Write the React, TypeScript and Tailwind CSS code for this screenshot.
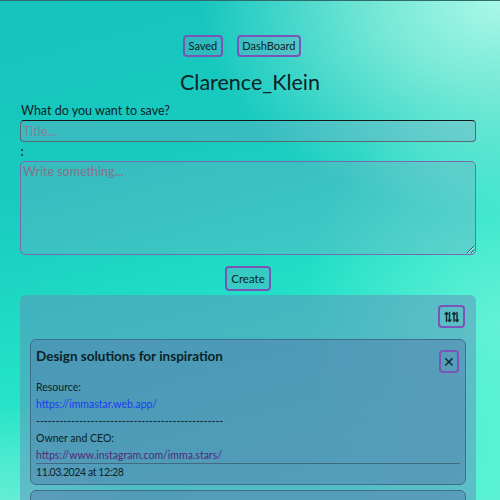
import React, { useState } from 'react';

const SortIcon = () => (
  <svg width="16" height="12" viewBox="0 0 16 12" fill="none" stroke="#0f2a30" strokeWidth="1.4" strokeLinecap="round" strokeLinejoin="round">
    <path d="M2.5 10.5V1.5M1 3L2.5 1.5L4 3" />
    <path d="M5.5 1.5V10.5M4 9L5.5 10.5L7 9" />
    <path d="M10 10.5V1.5M8.5 3L10 1.5L11.5 3" />
    <path d="M13 1.5V10.5M11.5 9L13 10.5L14.5 9" />
  </svg>
);

const App: React.FC = () => {
  const [title, setTitle] = useState('');
  const [body, setBody] = useState('');

  return (
    <div
      className="min-h-[500px] border-t border-[#2f6b6b] bg-[radial-gradient(ellipse_60%_40%_at_100%_0%,#aaf8e6_0%,rgba(160,246,226,0.7)_40%,transparent_100%),radial-gradient(ellipse_40%_45%_at_100%_60%,rgba(120,246,220,0.7)_0%,transparent_100%),radial-gradient(ellipse_30%_25%_at_0%_100%,rgba(150,240,224,0.7)_0%,transparent_100%),linear-gradient(165deg,#16c3be_0%,#18cbbf_30%,#22e0c6_55%,#34eccb_75%,#5cf2d4_100%)] font-['Lato',sans-serif] text-[#0b2327]"
    >
      <div className="flex justify-center gap-[14px] pt-[34px] pr-[16px]">
        <button className="rounded-[4px] border-2 border-[#7a55b8] bg-[rgba(120,150,190,0.25)] px-[3.5px] text-[11px] leading-[18px]">
          Saved
        </button>
        <button className="rounded-[4px] border-2 border-[#7a55b8] bg-[rgba(120,150,190,0.25)] px-[3.5px] text-[11px] leading-[18px]">
          DashBoard
        </button>
      </div>

      <h1 className="mt-[10px] text-center text-[21.5px] leading-[30px]">Clarence_Klein</h1>

      <div className="pl-[20px] pr-[24px]">
        <label className="mt-[5px] block pl-px text-[12.5px] leading-[18px]">What do you want to save?</label>
        <input
          value={title}
          onChange={e => setTitle(e.target.value)}
          placeholder="Title..."
          className="mt-0 block h-[22px] w-full rounded-[4px] border border-[#5a6a70] border-t-[#101818] bg-[rgba(128,160,195,0.3)] px-[2px] text-[12.5px] outline-none placeholder:text-[#8a7f98]"
        />
        <div className="ml-[1px] mt-[7px] h-[7px] w-0 border-l-2 border-dotted border-[#24504f]" />
        <textarea
          value={body}
          onChange={e => setBody(e.target.value)}
          placeholder="Write something..."
          className="mt-[5px] block h-[94px] w-full rounded-[5px] border border-[#7a6ab0] bg-[rgba(128,160,195,0.3)] px-[2px] py-[1px] text-[12.5px] outline-none placeholder:text-[#8c6f88]"
        />
        <div className="mt-[11px] flex justify-center">
          <button className="rounded-[4px] border-2 border-[#7a55b8] bg-[rgba(120,150,190,0.25)] px-[4px] py-[2px] text-[11.5px] leading-[17px]">
            Create
          </button>
        </div>

        <div className="mt-[4px] rounded-[6px] bg-[rgba(98,142,184,0.5)] px-[10px] pt-[10px] pb-[10px]">
          <div className="flex justify-end pr-px">
            <button className="flex h-[23px] w-[27px] items-center justify-center rounded-[4px] border-2 border-[#7a55b8]">
              <SortIcon />
            </button>
          </div>

          <div className="mt-[11px] rounded-[6px] border border-[#3f6f8c] bg-[rgba(83,124,176,0.5)] px-[5px] pt-[6px] pb-[4px]">
            <div className="flex items-start justify-between">
              <h2 className="text-[13.5px] font-bold leading-[20px]">Design solutions for inspiration</h2>
              <button className="mt-[4px] mr-[1px] flex h-[23px] w-[20px] items-center justify-center rounded-[4px] border-2 border-[#7a55b8] text-[14px] leading-none">
                ✕
              </button>
            </div>
            <div className="mt-[6px] text-[10.5px] leading-[17px]">
              <p>Resource:</p>
              <p className="text-[#1b3cf0]">https://immastar.web.app/</p>
              <p>------------------------------------------------</p>
              <p>Owner and CEO:</p>
              <p className="text-[#4f2a78]">https://www.instagram.com/imma.stars/</p>
            </div>
            <div className="mt-[-1px] border-t border-[#3f6a80] pt-px text-[10.5px] leading-[15px] tracking-[-0.4px]">11.03.2024 at 12:28</div>
          </div>

          <div className="mt-[5px] h-[40px] rounded-[6px] border border-[#3f6f8c] bg-[rgba(83,124,176,0.5)]" />
        </div>
      </div>
    </div>
  );
};

export default App;
